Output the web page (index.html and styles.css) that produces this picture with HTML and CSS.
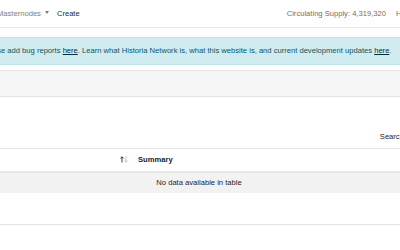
FILE: index.html
```html
<html>
<head>
    <meta charset="utf-8">
    <meta name="viewport" content="width=device-width,initial-scale=1">
    <title>Proposals | Historia Network</title>
    <link rel="stylesheet" href="styles.css">
</head>
<body>
    <nav class="topbar">
        <div class="nav-left">
            <span class="nav-item dropdown">Masternodes</span>
            <span class="nav-item active">Create</span>
        </div>
        <div class="nav-right">
            <span class="nav-stat">Circulating Supply: 4,319,320</span>
            <span class="nav-stat">Height</span>
        </div>
    </nav>

    <div class="alert">
        Please add bug reports <a href="#">here</a>. Learn what Historia Network is, what this website is, and current development updates <a href="#">here</a>.
    </div>

    <div class="card">
        <div class="card-header"></div>
        <div class="card-body">
            <div class="dt-filter">
                <label>Search:</label>
                <span class="dt-input"></span>
            </div>
            <table class="dt-table">
                <thead>
                    <tr>
                        <th class="col-first">
                            <svg class="sort-icon" width="8" height="7" viewBox="0 0 8 7">
                                <path d="M2 6.5V0.8M0.4 2.4L2 0.8L3.6 2.4" fill="none" stroke="#222" stroke-width="0.9"/>
                                <path d="M6 0.5V6.2M4.4 4.6L6 6.2L7.6 4.6" fill="none" stroke="#bbb" stroke-width="0.9"/>
                            </svg>
                        </th>
                        <th class="col-summary">Summary</th>
                    </tr>
                </thead>
                <tbody>
                    <tr class="odd">
                        <td colspan="2" class="dt-empty">No data available in table</td>
                    </tr>
                </tbody>
            </table>
            <div class="dt-info"></div>
        </div>
    </div>
</body>
</html>
```

FILE: styles.css
```css
* {
    font-family: "Liberation Sans", Arial, sans-serif;
    box-sizing: border-box;
}

body {
    margin: 0;
    width: 400px;
    height: 250px;
    overflow: hidden;

    background-color: #ffffff;

    font-size: 7.6px;
    color: #212529;
}

.topbar {
    display: flex;
    align-items: center;

    height: 28px;
    border-bottom: 1px solid #e9e9e9;
}

.nav-left {
    display: flex;
    gap: 8px;

    margin-left: -3px;
}

.nav-item {
    color: #7d7d7d;
    white-space: nowrap;
}

.nav-item.active {
    color: #2b2b2b;
}

.dropdown::after {
    content: "";
    display: inline-block;

    margin-left: 4px;
    vertical-align: 2px;

    border-top: 3px solid;
    border-left: 2.5px solid transparent;
    border-right: 2.5px solid transparent;
}

.nav-right {
    display: flex;
    gap: 10px;

    margin-left: 207px;
}

.nav-stat {
    color: #6f6f6f;
    white-space: nowrap;
}

.alert {
    width: 460px;
    height: 28px;

    margin: 9px 0 5px -31px;
    padding: 0 12px;

    background-color: #d1ecf1;
    border: 1px solid #bee5eb;
    border-radius: 3px;

    line-height: 26px;
    white-space: nowrap;
    color: #0c5460;
}

.alert a {
    color: #062c33;
}

.card {
    margin: 0 -108px 0 -110px;

    border: 1px solid #e3e3e3;
}

.card-header {
    height: 26px;

    background-color: #f5f5f5;
    border-bottom: 1px solid #e3e3e3;
}

.card-body {
    padding: 28px 10px 0 10px;
}

.dt-filter {
    display: flex;
    justify-content: flex-end;
    align-items: center;
    gap: 4px;

    height: 22px;
    margin-bottom: 1px;
}

.dt-input {
    width: 87px;
    height: 20px;

    border: 1px solid #ced4da;
    border-radius: 3px;
}

.dt-table {
    width: 100%;
    table-layout: fixed;
    border-collapse: collapse;

    font-size: 7.6px;
    color: #212529;
}

.dt-table th {
    height: 23px;
    padding: 0 7px;

    border-top: 1px solid #e6e6e6;
    border-bottom: 2px solid #e6e6e6;

    text-align: left;
    font-weight: bold;
}

.dt-table th.col-first {
    width: 230px;
    padding-right: 3px;

    text-align: right;
}

.sort-icon {
    display: inline-block;
    vertical-align: middle;
}

.dt-table td {
    height: 21px;
    padding: 0 7px;
}

.odd {
    background-color: #f2f2f2;
}

.dt-empty {
    text-align: center;
}

.dt-info {
    height: 31px;
}
```
